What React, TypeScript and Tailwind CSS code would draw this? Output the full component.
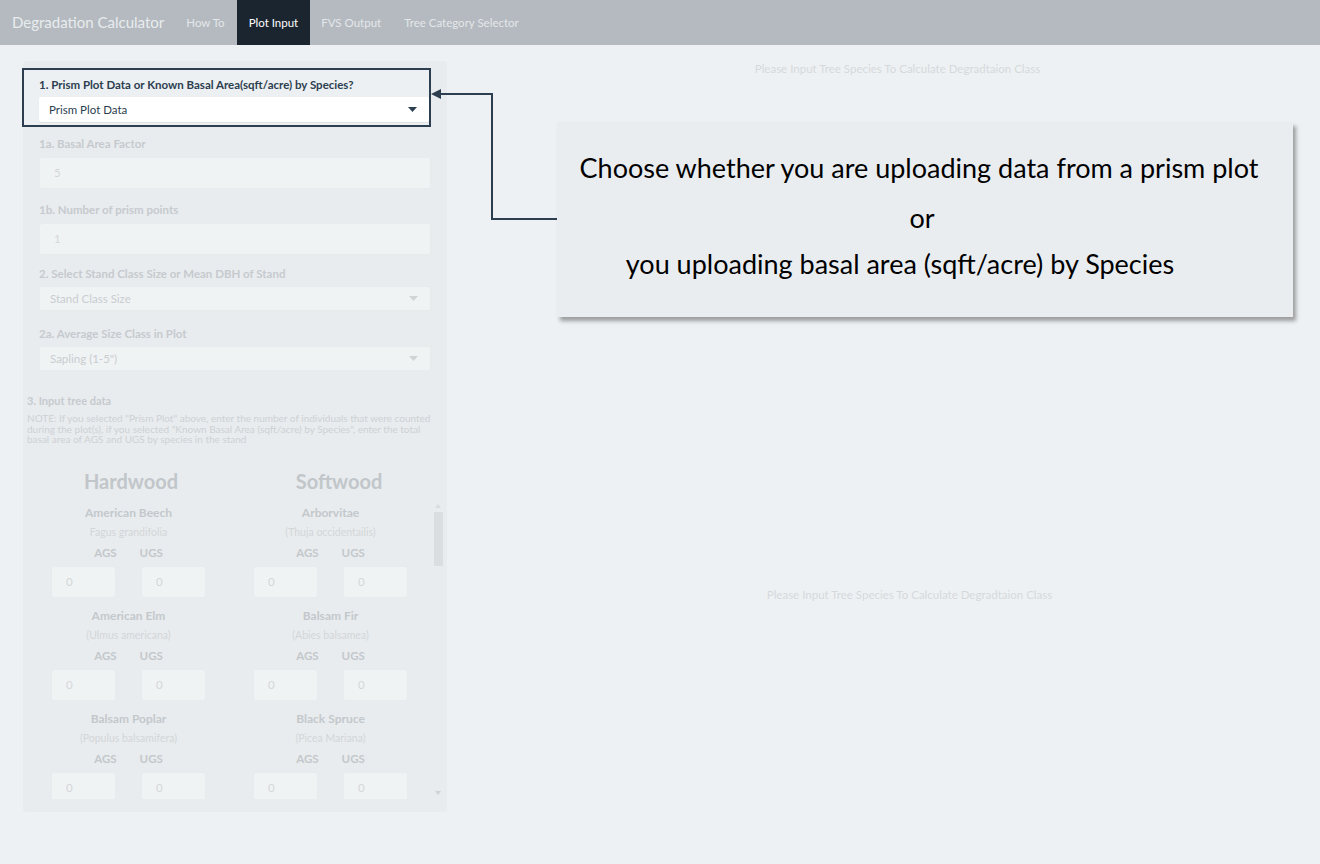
import React from "react";

const species = [
  [
    { name: "American Beech", latin: "Fagus grandifolia" },
    { name: "Arborvitae", latin: "(Thuja occidentailis)" },
  ],
  [
    { name: "American Elm", latin: "(Ulmus americana)" },
    { name: "Balsam Fir", latin: "(Abies balsamea)" },
  ],
  [
    { name: "Balsam Poplar", latin: "(Populus balsamifera)" },
    { name: "Black Spruce", latin: "(Picea Mariana)" },
  ],
];

function Caret({ color }: { color: string }) {
  return (
    <svg width="9" height="5" viewBox="0 0 9 5">
      <path d="M0 0 L9 0 L4.5 5 Z" fill={color} />
    </svg>
  );
}

function FadedInput({ value }: { value: string }) {
  return (
    <div className="h-[32px] w-full rounded-[3px] border border-[#e8ebed] bg-[#f0f3f4] pl-[14px] flex items-center text-[11.5px] text-[#d3d7da]">
      {value}
    </div>
  );
}

function FadedSelect({ value }: { value: string }) {
  return (
    <div className="h-[25px] w-full rounded-[2px] border border-[#e8ebed] bg-[#f0f3f4] pl-[10px] pr-[12px] flex items-center justify-between text-[11.5px] text-[#c9cdd1]">
      <span>{value}</span>
      <Caret color="#d0d4d7" />
    </div>
  );
}

function SpeciesCell({ name, latin, pl }: { name: string; latin: string; pl: string }) {
  return (
    <div className={pl}>
      <div className="w-[155px] flex flex-col items-center">
        <div className="h-[20px] leading-[20px] text-[12px] font-bold text-[#c3c8cc]">{name}</div>
        <div className="h-[18px] leading-[18px] text-[10.5px] text-[#d2d6d9]">{latin}</div>
        <div className="mt-[3px] h-[18px] leading-[18px] text-[11.5px] font-bold text-[#c3c8cc] flex gap-[23px]">
          <span>AGS</span>
          <span>UGS</span>
        </div>
        <div className="mt-[4px] flex gap-[25px] w-full">
          <div className="w-[65px]">
            <FadedInput value="0" />
          </div>
          <div className="w-[65px]">
            <FadedInput value="0" />
          </div>
        </div>
      </div>
    </div>
  );
}

export default function App() {
  return (
    <div
      className="relative w-[1320px] h-[864px] overflow-hidden bg-[#eef1f3]"
      style={{ fontFamily: "Lato, 'Liberation Sans', sans-serif" }}
    >
      {/* Navbar */}
      <div className="h-[45px] bg-[#b4bac0] flex items-stretch">
        <div className="pl-[12px] pr-[10px] flex items-center text-[15px] text-[#e9ecee]">
          Degradation Calculator
        </div>
        <div className="px-[12px] flex items-center text-[11.5px] text-[#e4e7ea]">How To</div>
        <div className="px-[12px] flex items-center text-[11.5px] text-white bg-[#1b2530]">Plot Input</div>
        <div className="px-[11px] flex items-center text-[11.5px] text-[#e4e7ea]">FVS Output</div>
        <div className="px-[12px] flex items-center text-[11.5px] text-[#e4e7ea]">Tree Category Selector</div>
      </div>

      <div className="flex">
        {/* Sidebar */}
        <div className="ml-[23px] mt-[16px] w-[424px] h-[751px] bg-[#e9ecee] rounded-[3px] pt-[7px]">
          {/* Highlighted group */}
          <div className="ml-[-1px] w-[409px] h-[59px] border-2 border-[#2c3e50] bg-[#edf0f2] pl-[15px] pt-[8px]">
            <div className="h-[13px] leading-[13px] text-[11.5px] font-bold text-[#2c3e50]">
              1. Prism Plot Data or Known Basal Area(sqft/acre) by Species?
            </div>
            <div className="mt-[6px] h-[25px] bg-white rounded-[2px] pl-[10px] pr-[12px] flex items-center justify-between text-[11.5px] text-[#2c3e50] shadow-[0_1px_1px_rgba(0,0,0,0.06)]">
              <span>Prism Plot Data</span>
              <Caret color="#2c3e50" />
            </div>
          </div>

          <div className="pl-[16px] pr-[16px]">
            <div className="mt-[10px] h-[14px] leading-[14px] text-[11.5px] font-bold text-[#c6cacf]">1a. Basal Area Factor</div>
            <div className="mt-[6px]">
              <FadedInput value="5" />
            </div>
            <div className="mt-[14px] h-[14px] leading-[14px] text-[11.5px] font-bold text-[#c6cacf]">1b. Number of prism points</div>
            <div className="mt-[6px]">
              <FadedInput value="1" />
            </div>
            <div className="mt-[12px] h-[14px] leading-[14px] text-[11.5px] font-bold text-[#c6cacf]">
              2. Select Stand Class Size or Mean DBH of Stand
            </div>
            <div className="mt-[5px]">
              <FadedSelect value="Stand Class Size" />
            </div>
            <div className="mt-[16px] h-[14px] leading-[14px] text-[11.5px] font-bold text-[#c6cacf]">2a. Average Size Class in Plot</div>
            <div className="mt-[5px]">
              <FadedSelect value="Sapling (1-5&quot;)" />
            </div>
          </div>

          <div className="pl-[4px] pr-[15px]">
            <div className="mt-[23px] h-[14px] leading-[14px] text-[11px] font-bold text-[#c6cacf]">3. Input tree data</div>
            <div className="mt-[5px] text-[10px] leading-[10.5px] text-[#cdd1d5]">
              NOTE: If you selected "Prism Plot" above, enter the number of individuals that were counted during the plot(s), if you
              selected "Known Basal Area (sqft/acre) by Species", enter the total basal area of AGS and UGS by species in the stand
            </div>
          </div>

          {/* Headings */}
          <div className="mt-[24px] ml-[4px] flex h-[24px]">
            <div className="w-[208px] text-center text-[20px] leading-[24px] font-bold text-[#c1c6ca]">Hardwood</div>
            <div className="w-[208px] text-center text-[20px] leading-[24px] font-bold text-[#c1c6ca]">Softwood</div>
          </div>

          {/* Scroll area */}
          <div className="mt-[8px] ml-[4px] flex h-[298px]">
            <div className="w-[405px] h-full overflow-hidden pt-[2px]">
              {species.map((row, i) => (
                <div key={i} className="flex mb-[8px]">
                  <SpeciesCell name={row[0].name} latin={row[0].latin} pl="pl-[24px] w-[208px]" />
                  <SpeciesCell name={row[1].name} latin={row[1].latin} pl="pl-[18px] w-[197px]" />
                </div>
              ))}
            </div>
            <div className="w-[12px] h-full flex flex-col items-center pt-[3px]">
              <svg width="6" height="4" viewBox="0 0 6 4">
                <path d="M0 4 L3 0 L6 4 Z" fill="#d8dcdf" />
              </svg>
              <div className="mt-[4px] w-[9px] h-[54px] bg-[#dadee1]" />
              <div className="flex-1" />
              <svg width="6" height="4" viewBox="0 0 6 4" className="mb-[4px]">
                <path d="M0 0 L6 0 L3 4 Z" fill="#cfd3d6" />
              </svg>
            </div>
          </div>
        </div>

        {/* Main panel */}
        <div className="flex-1 flex flex-col items-center">
          <div className="mt-[17px] ml-[28px] text-[11.5px] leading-[14px] text-[#d5d9dc]">
            Please Input Tree Species To Calculate Degradtaion Class
          </div>
          <div className="mt-[512px] ml-[52px] text-[11.5px] leading-[14px] text-[#d5d9dc]">
            Please Input Tree Species To Calculate Degradtaion Class
          </div>
        </div>
      </div>

      {/* Connector arrow */}
      <svg className="absolute left-0 top-0 pointer-events-none" width="1320" height="864">
        <polyline points="440,94 492,94 492,219 557,219" fill="none" stroke="#2c3e50" strokeWidth="2" />
        <path d="M431 94 L441 89 L441 99 Z" fill="#2c3e50" />
      </svg>

      {/* Callout */}
      <div
        className="absolute left-[557px] top-[122px] w-[736px] h-[195px] bg-[#eaedf0] shadow-[3px_4px_4px_rgba(0,0,0,0.35)] flex flex-col items-center pt-[27px] text-black"
        style={{ fontFamily: "Lato, 'Liberation Sans', sans-serif" }}
      >
        <div className="text-[27px] leading-[38px] ml-[-12px]">Choose whether you are uploading data from a prism plot</div>
        <div className="mt-[12px] text-[27px] leading-[38px] ml-[-6px]">or</div>
        <div className="mt-[8px] text-[27px] leading-[38px] mr-[50px]">you uploading basal area (sqft/acre) by Species</div>
      </div>
    </div>
  );
}
